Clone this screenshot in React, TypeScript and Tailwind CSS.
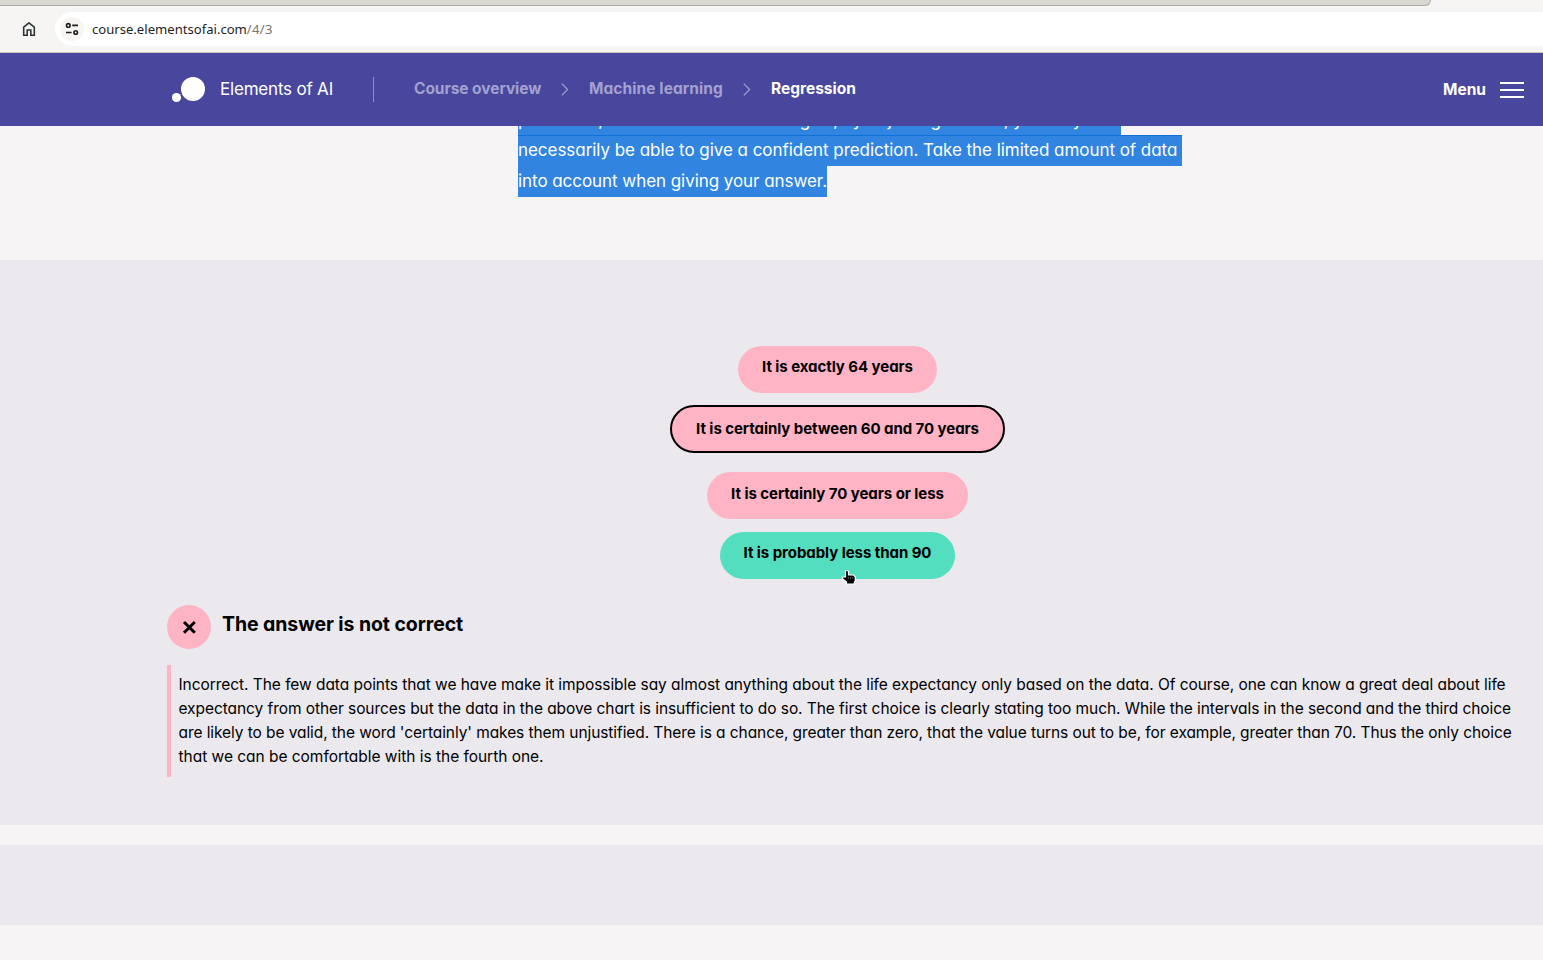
type Line = { text: string; tracking: string };

const explanation: Line[] = [
  { text: "Incorrect. The few data points that we have make it impossible say almost anything about the life expectancy only based on the data. Of course, one can know a great deal about life", tracking: "tracking-[-0.056px]" },
  { text: "expectancy from other sources but the data in the above chart is insufficient to do so. The first choice is clearly stating too much. While the intervals in the second and the third choice", tracking: "tracking-[-0.068px]" },
  { text: "are likely to be valid, the word 'certainly' makes them unjustified. There is a chance, greater than zero, that the value turns out to be, for example, greater than 70. Thus the only choice", tracking: "tracking-[-0.08px]" },
  { text: "that we can be comfortable with is the fourth one.", tracking: "tracking-[-0.029px]" },
];

function Chevron() {
  return (
    <svg className="mt-px ml-[20px] mr-[20px]" width="8" height="13" viewBox="0 0 8 13" fill="none" stroke="currentColor" strokeWidth="1.2">
      <path d="M.8.7 6.600 6.500l-5.800 5.800" />
    </svg>
  );
}

function BrowserBar() {
  return (
    <div className="flex h-[53px] shrink-0 flex-col border-b border-[#cbc8bb] bg-[#f6f5f4]">
      <div className="h-[6px] w-[1431px] shrink-0 rounded-br-[10px] border-b border-r border-[#b0aeab] bg-[#dbd8d2]" />
      <div className="mt-[6px] flex h-[34px] items-center">
        <div className="flex w-[55px] items-center pl-[22px]">
          <svg width="14" height="14" viewBox="0 0 14 14" fill="none" stroke="#2e3436" strokeWidth="1.6">
            <path d="M1.700 13.200V5.200L7 .9l5.300 4.300v8H8.800V8H5.200v5.200z" />
          </svg>
        </div>
        <div className="flex h-[34px] flex-1 items-center rounded-l-full bg-white pl-[5px]">
          <div className="flex size-6 items-center justify-center rounded-full bg-[#f6f5f4]">
            <svg width="14" height="14" viewBox="0 0 14 14" fill="none" stroke="#1f1f1f" strokeWidth="1.6">
              <circle cx="3.300" cy="3.400" r="1.800" />
              <path d="M7.200 3.400H13M1 10.500h5.600" />
              <circle cx="10.700" cy="10.500" r="1.800" />
            </svg>
          </div>
          <div className="ml-2 font-['Noto_Sans',sans-serif] text-[13.1px] leading-5 text-[#1f1f1f]">
            course.elementsofai.com<span className="tracking-[0.3px] text-[#757575]">/4/3</span>
          </div>
        </div>
      </div>
    </div>
  );
}

function SiteHeader() {
  return (
    <header className="flex h-[73px] shrink-0 items-center bg-[#48479d] pl-[172px] pr-[19px] text-white">
      <svg width="33" height="26" viewBox="0 0 33 26" fill="white">
        <circle cx="21" cy="12" r="12" />
        <circle cx="4.500" cy="20.500" r="4.600" />
      </svg>
      <span className="ml-[15px] w-[113px] whitespace-pre text-[17px] tracking-[-0.2px]">Elements of AI</span>
      <span className="ml-10 h-[25px] w-px bg-[#8d8cc6]" />
      <nav className="ml-10 flex items-center pb-0.5 text-[15.5px] font-bold text-[#a3a1d0]">
        <span className="w-[127px] whitespace-pre tracking-[-0.06px]">Course overview</span>
        <Chevron />
        <span className="w-[134px] whitespace-pre tracking-[0.08px]">Machine learning</span>
        <Chevron />
        <span className="text-white">Regression</span>
      </nav>
      <span className="ml-auto text-[15.5px] font-bold">Menu</span>
      <svg className="ml-[14px]" width="24" height="16" viewBox="0 0 24 16" stroke="white" strokeWidth="2">
        <path d="M0 1h24M0 8h24M0 15h24" />
      </svg>
    </header>
  );
}

export default function App() {
  return (
    <div className="flex h-[960px] w-full flex-col overflow-hidden bg-[#f6f4f5] font-['Inter',sans-serif] text-black [font-feature-settings:'cv11']">
      <BrowserBar />
      <SiteHeader />

      <div className="flex h-[134px] shrink-0 flex-col items-start overflow-hidden pl-[518px] text-[17px] leading-[31px] text-white">
        <div className="-mt-[21px] h-[31px] w-[603px] whitespace-pre bg-[#3185e0] tracking-[-0.04px]">
          {"prediction, and even if that is so to give, by adjusting the line, you may not "}
        </div>
        <div className="-mt-px h-[31px] whitespace-pre border-t border-[#0f70d7] bg-[#3185e0] leading-[29px] tracking-[-0.044px]">
          {"necessarily be able to give a confident prediction. Take the limited amount of data "}
        </div>
        <div className="h-[31px] whitespace-pre bg-[#3185e0] tracking-[-0.054px]">into account when giving your answer.</div>
      </div>

      <section className="flex h-[565px] shrink-0 flex-col bg-[#ebe8ee] pl-[167px] pt-[86px]">
        <div className="flex w-[1341px] flex-col items-center text-[15px] font-bold tracking-[-0.06px]">
          <button className="h-[47px] w-[199px] rounded-full bg-[#ffb4c6] pb-[4px]">It is exactly 64 years</button>
          <button className="mt-3 h-12 w-[335px] rounded-full border-2 border-black bg-[#ffb4c6]">It is certainly between 60 and 70 years</button>
          <button className="mt-[19px] h-[47px] w-[261px] rounded-full bg-[#ffb4c6] pb-[2px]">It is certainly 70 years or less</button>
          <button className="relative mt-[13px] h-[47px] w-[235px] rounded-full bg-[#53dfbf] pb-[4px]">
            It is probably less than 90
            <svg className="absolute left-[121px] top-[37px]" width="17" height="17" viewBox="0 0 17 17">
              <path d="M4.500 1.500h2l1 1V6h5l1.800 1.800V12l-1 1v2H5.500v-2l-4-3.200V8h3z" fill="black" stroke="white" strokeWidth="1.200" />
              <path d="M7.300 8v2M9.500 8v2M11.800 8v2" stroke="#888" strokeWidth=".6" />
            </svg>
          </button>
        </div>
        <div className="mt-[26px] flex h-[44px] items-center">
          <div className="flex size-11 items-center justify-center rounded-full bg-[#ffb4c6]">
            <svg width="14" height="14" viewBox="0 0 14 14" stroke="black" strokeWidth="3">
              <path d="M2 2l10.800 10.800M12.800 2l-10.800 10.800" />
            </svg>
          </div>
          <h3 className="ml-[11px] pb-[4px] text-[19.5px] font-bold tracking-[-0.08px]">The answer is not correct</h3>
        </div>
        <div className="mt-4 flex h-28 flex-col border-l-4 border-[#ffb4c6] pl-[7.5px] pt-2 text-[15.5px] leading-6">
          {explanation.map((line) => (
            <p key={line.text} className={"whitespace-pre " + line.tracking}>{line.text}</p>
          ))}
        </div>
      </section>
      <section className="mt-5 h-20 shrink-0 bg-[#ebe8ee]" />
    </div>
  );
}
